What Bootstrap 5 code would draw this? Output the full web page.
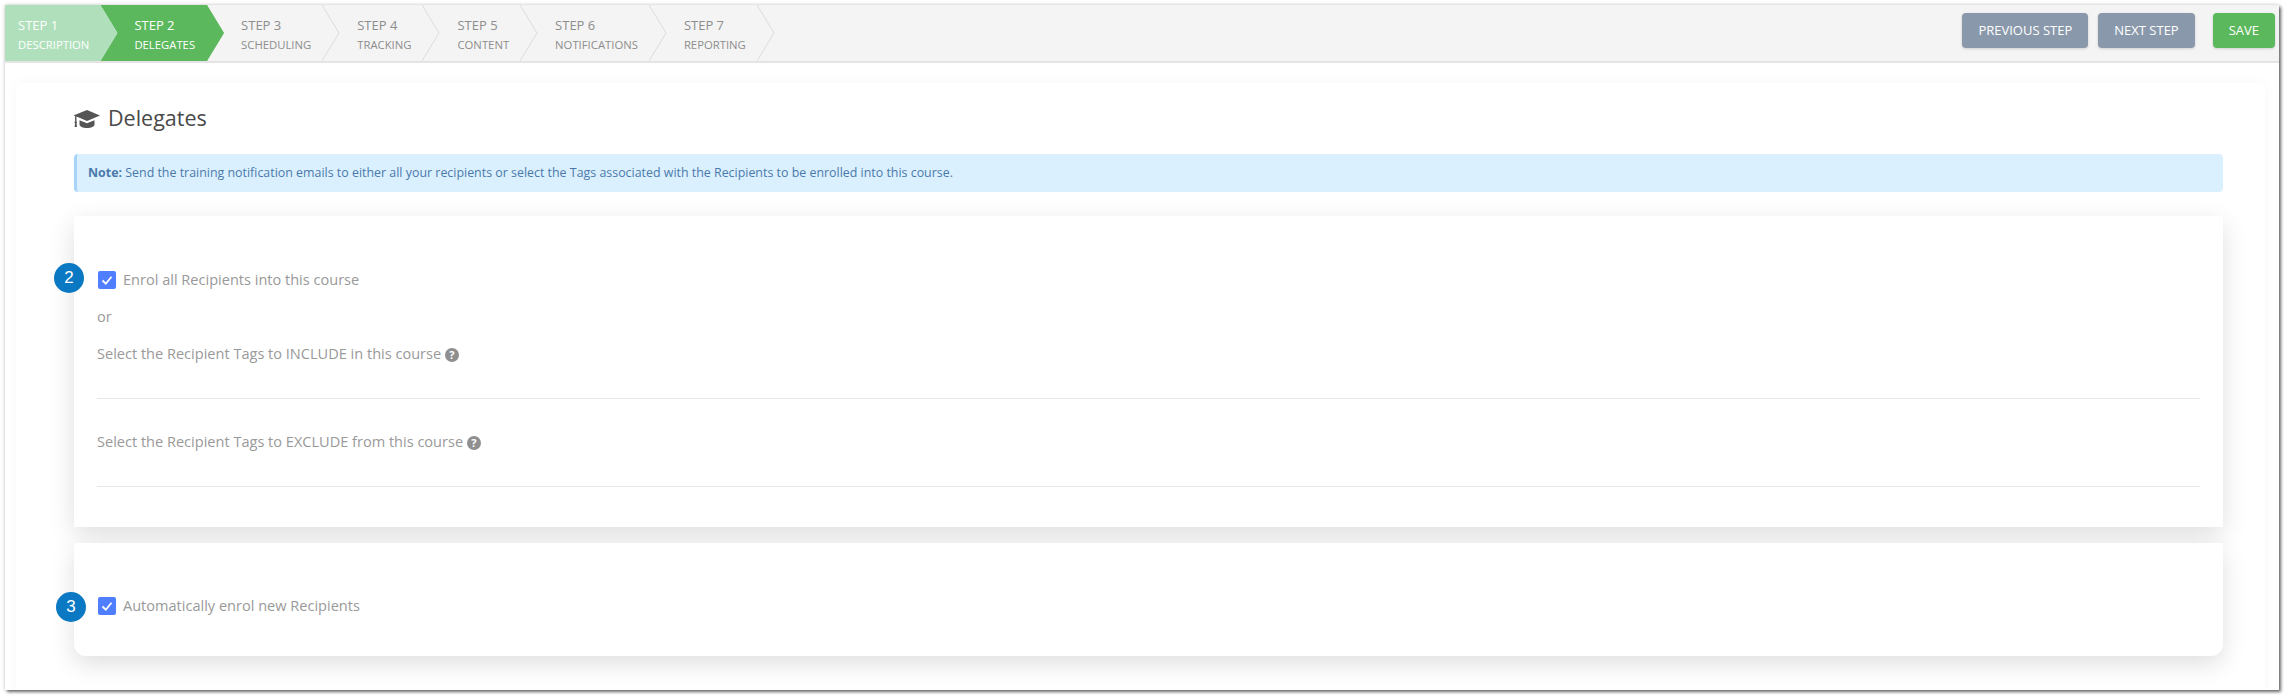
<!DOCTYPE html>
<html lang="en">
<head>
<meta charset="utf-8">
<title>Delegates</title>
<link href="https://cdn.jsdelivr.net/npm/bootstrap@5.3.0/dist/css/bootstrap.min.css" rel="stylesheet">
<style>
html,body{height:100%;}
body{background:#fff;padding:5px 8px 9px 5px;font-family:"Open Sans","Noto Sans",sans-serif;font-size:14.55px;color:#999;overflow:hidden;}
.shot-frame{height:685px;background:#fff;box-shadow:2px 2px 3px rgba(0,0,0,.55),0 0 4px rgba(0,0,0,.2);overflow:hidden;}
.top-bar{height:58px;background:#f4f4f4;border-bottom:2px solid #e4e4e4;}
.step-item{position:relative;height:56px;margin-left:-17px;padding:10px 29px 0 34px;color:#8d8d8d;font-size:11.3px;line-height:20px;text-transform:uppercase;white-space:nowrap;}
.step-item .step-num{display:block;font-size:13px;}
.step-item .step-sep{position:absolute;top:0;right:0;width:18px;height:56px;}
.step-done,.step-now{color:#fff;clip-path:polygon(0 0,calc(100% - 17px) 0,100% 50%,calc(100% - 17px) 100%,0 100%,17px 50%);}
.step-done{background:#b0dfbb;margin-left:0;padding-left:13px;padding-right:28px;z-index:2;clip-path:polygon(0 0,calc(100% - 17px) 0,100% 50%,calc(100% - 17px) 100%,0 100%);}
.step-now{background:#5cb85c;z-index:1;}
.action-btn{height:35px;padding:0 16px;font-size:13px;line-height:35px;border:0;border-radius:4px;color:#fff;box-shadow:0 1px 3px rgba(0,0,0,.15);}
.action-btn:hover{color:#fff;}
.btn-slate,.btn-slate:hover{background:#8a98ab;}
.btn-leaf,.btn-leaf:hover{background:#5cb85c;}
.gap-next{margin-right:10px;}
.gap-save{margin-right:18px;}
.outer-sheet{margin:20px 14px 0 11px;padding:0 42px 0 58px;height:640px;background:#fff;border-radius:8px;box-shadow:0 0 14px rgba(0,0,0,.035);}
.sheet-title{height:71px;padding-top:20px;color:#4a4a4a;font-size:21.5px;line-height:30px;}
.sheet-title svg{width:26px;height:20px;margin-right:8px;vertical-align:-3px;}
.note-box{height:38px;margin:0;padding:0 11px;border:0;border-left:3px solid #a6d4fa;border-radius:4px;background:#dbf0fe;color:#4a79ab;font-size:12.42px;line-height:37px;}
.tag-card{position:relative;border:0;border-radius:0;box-shadow:0 8px 24px rgba(0,0,0,.13);}
.card-first{height:311px;margin-top:24px;padding:54px 23px 0;}
.card-second{height:113px;margin-top:16px;padding:53px 23px 0;border-radius:0 0 12px 12px;}
.tick-row{display:flex;align-items:center;gap:7px;margin:0;height:20px;}
.tick-box{flex:none;width:18px;height:18px;margin:0 0 0 1px;border:0;border-radius:2px;background:#4f7fff;}
.tick-box svg{display:block;width:18px;height:18px;}
.plain-line{height:20px;line-height:20px;margin:0;}
.or-line{margin-top:16px;}
.inc-line{margin-top:17px;}
.exc-line{margin-top:32px;}
.tag-rule{height:1px;margin:35px 2px 0 0;background:#e6e6e6;opacity:1;border:0;}
.help-dot{display:inline-flex;align-items:center;justify-content:center;width:14px;height:14px;border-radius:50%;background:#8f8f8f;color:#fff;font-size:11px;font-weight:700;line-height:1;vertical-align:0;}
.num-bubble{position:absolute;display:flex;align-items:center;justify-content:center;width:30px;height:30px;border-radius:50%;background:#0a78c2;color:#fff;font-family:"Liberation Sans",sans-serif;font-size:17px;}
.bubble-a{left:-20px;top:47px;}
.bubble-b{left:-18px;top:49px;}
</style>
</head>
<body>
<div class="shot-frame">
  <div class="top-bar d-flex justify-content-between">
    <div class="d-flex">
      <div class="step-item step-done"><span class="step-num">Step 1</span>Description</div>
      <div class="step-item step-now"><span class="step-num">Step 2</span>Delegates</div>
      <div class="step-item"><span class="step-num">Step 3</span>Scheduling<svg class="step-sep" viewBox="0 0 18 56"><polyline points="0,0 17,28 0,56" fill="none" stroke="#dcdcdc"/></svg></div>
      <div class="step-item"><span class="step-num">Step 4</span>Tracking<svg class="step-sep" viewBox="0 0 18 56"><polyline points="0,0 17,28 0,56" fill="none" stroke="#dcdcdc"/></svg></div>
      <div class="step-item"><span class="step-num">Step 5</span>Content<svg class="step-sep" viewBox="0 0 18 56"><polyline points="0,0 17,28 0,56" fill="none" stroke="#dcdcdc"/></svg></div>
      <div class="step-item"><span class="step-num">Step 6</span>Notifications<svg class="step-sep" viewBox="0 0 18 56"><polyline points="0,0 17,28 0,56" fill="none" stroke="#dcdcdc"/></svg></div>
      <div class="step-item"><span class="step-num">Step 7</span>Reporting<svg class="step-sep" viewBox="0 0 18 56"><polyline points="0,0 17,28 0,56" fill="none" stroke="#dcdcdc"/></svg></div>
    </div>
    <div class="d-flex align-items-start pt-2 pe-1">
      <a class="btn action-btn btn-slate gap-next" href="#">PREVIOUS STEP</a>
      <a class="btn action-btn btn-slate gap-save" href="#">NEXT STEP</a>
      <a class="btn action-btn btn-leaf" href="#">SAVE</a>
    </div>
  </div>
  <div class="outer-sheet">
    <div class="sheet-title">
      <svg viewBox="0 0 26 20" aria-hidden="true"><g fill="#555" transform="matrix(-1 0 0 1 26 0)"><path d="M13 1 0 6.500l13 5.500 10.500-4.400v5.200a1 1 0 0 0-.5.900c0 .4.200.7.500.9L23 18h2.400l-.5-3.900c.3-.2.500-.5.500-.9a1 1 0 0 0-.5-.9V7l1.600-.5z"/><path d="M5.500 11.200v4.300c0 1.900 3.400 3.500 7.500 3.500s7.500-1.600 7.500-3.500v-4.300L13 14.300z"/></g></svg>Delegates
    </div>
    <div class="alert note-box" role="alert"><strong>Note:</strong> Send the training notification emails to either all your recipients or select the Tags associated with the Recipients to be enrolled into this course.</div>
    <div class="card tag-card card-first">
      <span class="num-bubble bubble-a">2</span>
      <label class="tick-row">
        <span class="tick-box"><svg viewBox="0 0 18 18"><path d="M4.500 9.500 7.800 12.700 13.500 5.800" fill="none" stroke="#fff" stroke-width="1.800"/></svg></span>
        Enrol all Recipients into this course
      </label>
      <p class="plain-line or-line">or</p>
      <p class="plain-line inc-line">Select the Recipient Tags to INCLUDE in this course <span class="help-dot">?</span></p>
      <hr class="tag-rule">
      <p class="plain-line exc-line">Select the Recipient Tags to EXCLUDE from this course <span class="help-dot">?</span></p>
      <hr class="tag-rule">
    </div>
    <div class="card tag-card card-second">
      <span class="num-bubble bubble-b">3</span>
      <label class="tick-row">
        <span class="tick-box"><svg viewBox="0 0 18 18"><path d="M4.500 9.500 7.800 12.700 13.500 5.800" fill="none" stroke="#fff" stroke-width="1.800"/></svg></span>
        Automatically enrol new Recipients
      </label>
    </div>
  </div>
</div>
<script src="https://cdn.jsdelivr.net/npm/bootstrap@5.3.0/dist/js/bootstrap.bundle.min.js"></script>
</body>
</html>
